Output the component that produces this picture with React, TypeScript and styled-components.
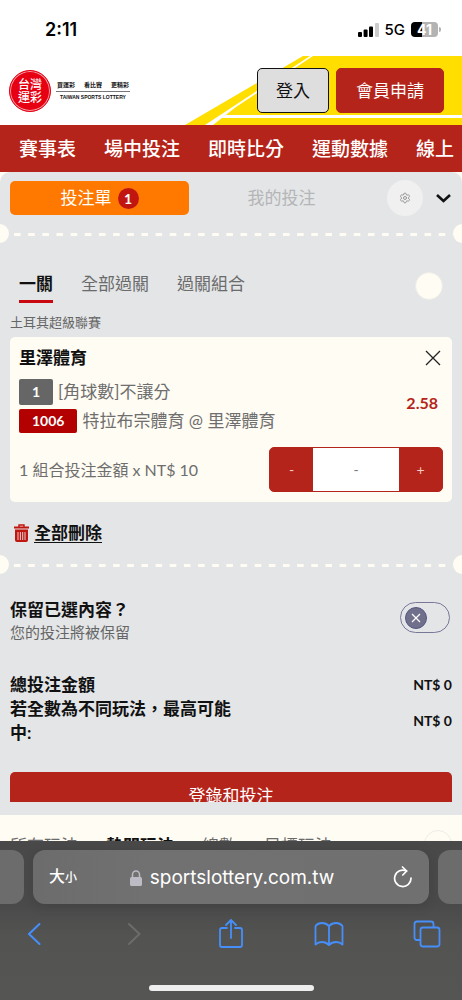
import React, { useState } from 'react';
import styled, { createGlobalStyle } from 'styled-components';
import { Settings } from 'lucide-react';

const red = '#b5241a';
const cream = '#fffcf3';
const panelGrey = '#e3e5e7';

const GlobalStyle = createGlobalStyle`
  *, *::before, *::after { box-sizing: border-box; }
  body {
    margin: 0;
    background: #fff;
    color: #111;
    font-family: Lato, "Noto Sans CJK TC", sans-serif;
    font-size: 17px;
    line-height: 24px;
  }
  button, input { font: inherit; color: inherit; margin: 0; }
  button { padding: 0; border: 0; background: none; cursor: pointer; }
  a { color: inherit; text-decoration: none; }
  h2, p { margin: 0; }
  svg { display: block; flex: none; }
`;

const Screen = styled.div`
  display: flex;
  flex-direction: column;
  height: 100vh;
  overflow: hidden;
`;

/* Phone status bar */

const StatusBar = styled.div`
  display: flex;
  flex: none;
  justify-content: space-between;
  align-items: center;
  height: 56px;
  padding: 3px 22px 0 45px;
  font-family: Inter, sans-serif;
  color: #000;
`;

const Clock = styled.time`
  font-size: 18px;
  font-weight: 600;
`;

const StatusIcons = styled.div`
  display: flex;
  align-items: center;
  gap: 6px;
  font-size: 15px;
  font-weight: 500;
`;

const Battery = styled.span`
  position: relative;
  width: 27px;
  height: 15px;
  margin-right: 2px;
  border-radius: 4px;
  background: linear-gradient(90deg, #000 41%, #b3b3b3 41%);
  color: #fff;
  font-size: 14px;
  font-weight: 700;
  line-height: 15px;
  text-align: center;

  &::after {
    content: '';
    position: absolute;
    top: 5px;
    right: -3px;
    width: 2px;
    height: 5px;
    border-radius: 0 2px 2px 0;
    background: #b3b3b3;
  }
`;

/* Site header */

const Page = styled.div`
  flex: 1;
  min-height: 0;
  overflow: hidden;
  background: ${cream};
`;

const Header = styled.header`
  position: relative;
  display: flex;
  align-items: center;
  justify-content: space-between;
  height: 69px;
  padding: 0 18px 0 9px;
  background: #fff;
`;

const HeaderArt = styled.svg`
  position: absolute;
  top: 0;
  right: 0;
`;

const Logo = styled.a`
  position: relative;
  display: flex;
  align-items: center;
  gap: 5px;
`;

const Seal = styled.span`
  display: grid;
  place-content: center;
  width: 42px;
  height: 42px;
  border: 1px solid #e60012;
  border-radius: 50%;
  background: #e60012;
  box-shadow: inset 0 0 0 1px #f7a0a5;
  color: #fff;
  font-size: 12px;
  font-weight: 500;
  line-height: 13px;
`;

const LogoText = styled.span`
  display: flex;
  flex-direction: column;
  width: 74px;
  font-weight: 700;
`;

const Slogan = styled.span`
  display: flex;
  justify-content: space-between;
  padding: 0 1px 1px;
  border-bottom: 1px solid #777;
  font-size: 6px;
  line-height: 10px;
`;

const LogoName = styled.span`
  font-family: "Liberation Sans", sans-serif;
  font-size: 5px;
  line-height: 10px;
  text-align: center;
  white-space: nowrap;
`;

const HeaderActions = styled.div`
  position: relative;
  display: flex;
  gap: 7px;
`;

const HeaderButton = styled.button<{ $primary?: boolean }>`
  height: 45px;
  padding: 0 ${p => (p.$primary ? 19 : 18)}px;
  border: 1px solid ${p => (p.$primary ? red : '#111')};
  border-radius: 5px;
  background: ${p => (p.$primary ? red : '#dedede')};
  color: ${p => (p.$primary ? '#fff' : '#111')};
`;

const Nav = styled.nav`
  display: flex;
  align-items: center;
  gap: 28px;
  height: 47px;
  padding-left: 19px;
  overflow: hidden;
  background: ${red};
  color: #fff;
  font-size: 19px;
  font-weight: 500;
  white-space: nowrap;
`;

/* Bet slip */

const Slip = styled.main`
  padding: 8px 0 13px;
  border-radius: 10px 10px 0 0;
  background: ${panelGrey};
`;

const SlipHeader = styled.div`
  display: flex;
  align-items: center;
  gap: 3px;
  height: 36px;
  padding: 0 10px;
`;

const SlipTab = styled.button<{ $active?: boolean }>`
  display: flex;
  flex: 1;
  align-items: center;
  justify-content: center;
  gap: 6px;
  height: 34px;
  border-radius: 5px;
  background: ${p => (p.$active ? '#ff7900' : 'transparent')};
  color: ${p => (p.$active ? '#fff' : '#b4b5b6')};
`;

const Count = styled.span`
  width: 21px;
  height: 21px;
  border-radius: 50%;
  background: #c1150f;
  font-size: 14px;
  font-weight: 700;
  line-height: 21px;
`;

const SettingsButton = styled.button`
  display: grid;
  place-items: center;
  width: 36px;
  height: 36px;
  margin: 0 9px 0 13px;
  border-radius: 50%;
  background: #f0f0f0;
  color: #999;
`;

const Perforation = styled.div`
  display: flex;
  align-items: center;
  justify-content: space-between;
  height: 19px;
  margin: 8px 0 0;
  overflow: hidden;

  &::before, &::after {
    content: '';
    width: 19px;
    height: 19px;
    margin-left: -10px;
    border-radius: 50%;
    background: ${cream};
  }
  &::after { margin: 0 -10px 0 0; }
`;

const Dashes = styled.span`
  flex: 1;
  height: 3px;
  margin: 2px 0 0 5px;
  background: linear-gradient(90deg, ${cream} 50%, transparent 50%) 0 0 / 14px 3px round;
`;

const TabRow = styled.div`
  display: flex;
  align-items: center;
  gap: 28px;
  padding: 0 19px;
`;

const Tab = styled.button<{ $active?: boolean }>`
  height: 35px;
  border-bottom: 3px solid ${p => (p.$active ? '#c9090f' : 'transparent')};
  color: ${p => (p.$active ? '#111' : '#6b6b6b')};
  font-weight: ${p => (p.$active ? 700 : 400)};
  white-space: nowrap;
`;

const RoundButton = styled.button`
  width: 28px;
  height: 28px;
  margin-left: auto;
  border: 1px solid #eeece8;
  border-radius: 50%;
  background: ${cream};
`;

const Selections = styled.section`
  padding-top: 25px;
`;

const League = styled.p`
  margin: 9px 10px 5px;
  color: #666;
  font-size: 13px;
  line-height: 20px;
`;

const Card = styled.article`
  margin: 0 10px;
  padding: 10px 9px;
  border-radius: 5px;
  background: ${cream};
`;

const CardHeader = styled.div`
  display: flex;
  align-items: center;
  justify-content: space-between;
  height: 22px;
  margin-bottom: 10px;
`;

const Title = styled.h2`
  font-size: 17px;
  font-weight: 700;
  line-height: 24px;
`;

const IconButton = styled.button`
  display: grid;
  place-items: center;
`;

const Selection = styled.div`
  display: flex;
  align-items: flex-start;
  justify-content: space-between;
  padding-right: 5px;
`;

const Lines = styled.div`
  display: grid;
  gap: 4px;
`;

const Line = styled.div`
  display: flex;
  align-items: center;
  gap: 5px;
  color: #6e6e6e;
`;

const Badge = styled.span<{ $red?: boolean }>`
  padding: 0 ${p => (p.$red ? 13 : 12)}px;
  min-width: 34px;
  border-radius: 2px;
  background: ${p => (p.$red ? '#b30000' : '#666')};
  color: #fff;
  font-size: 14px;
  font-weight: 700;
  line-height: ${p => (p.$red ? 24 : 26)}px;
  text-align: center;
`;

const Odds = styled.strong`
  color: ${red};
  font-size: 16px;
  line-height: 48px;
`;

const Stake = styled.div`
  display: flex;
  align-items: center;
  justify-content: space-between;
  margin-top: 14px;
  color: #6e6e6e;
  font-size: 16px;
`;

const Stepper = styled.div`
  display: flex;
  height: 45px;
  overflow: hidden;
  border: 1px solid ${red};
  border-radius: 5px;
  background: ${red};
  font-size: 14px;
`;

const StepButton = styled.button`
  width: 43px;
  color: #f3c9c5;
`;

const StakeInput = styled.input`
  width: 86px;
  border: 0;
  padding: 0;
  background: #fff;
  text-align: center;
  outline: 0;

  &::placeholder { color: #777; opacity: 1; }
`;

const DeleteAll = styled.button`
  display: flex;
  align-items: center;
  gap: 5px;
  height: 22px;
  margin: 20px 14px 11px;
  font-weight: 700;
  text-decoration: underline;
  text-underline-offset: 3px;
`;

const Summary = styled.section`
  padding: 24px 10px 0;
`;

const Keep = styled.label`
  display: flex;
  align-items: center;
  justify-content: space-between;
`;

const KeepHint = styled.p`
  color: #666;
  font-size: 15px;
  line-height: 20px;
`;

const Toggle = styled.input`
  appearance: none;
  width: 50px;
  height: 31px;
  margin: 0 2px 5px 0;
  border: 1px solid #77779a;
  border-radius: 16px;
  background: url("data:image/svg+xml,%3Csvg xmlns='http://www.w3.org/2000/svg' width='22' height='22'%3E%3Ccircle cx='11' cy='11' r='10.5' fill='%2370708c' stroke='%23555580'/%3E%3Cpath d='M7 7l8 8M15 7l-8 8' stroke='%23fff' stroke-width='1.2'/%3E%3C/svg%3E") no-repeat 4px center;

  &:checked { background-position: 22px center; }
`;

const Totals = styled.dl`
  display: grid;
  margin: 31px 0 27px;
`;

const Total = styled.div`
  display: flex;
  align-items: center;
  justify-content: space-between;
  font-weight: 700;
`;

const TotalLabel = styled.dt`
  width: 52%;
`;

const TotalValue = styled.dd`
  margin: 0;
  font-size: 14px;
`;

const SubmitArea = styled.div`
  height: 30px;
  overflow: hidden;
`;

const Submit = styled.button`
  width: 100%;
  height: 48px;
  border-radius: 5px;
  background: ${red};
  color: #fff;
`;

const Markets = styled.div`
  display: flex;
  align-items: flex-start;
  gap: 28px;
  padding: 15px 10px 0;
`;

/* Browser controls */

const BrowserBar = styled.footer`
  flex: none;
  padding: 9px 0;
  background: linear-gradient(#494949, #4a4a4a 40%, #535352 60%, #555553);
`;

const AddressRow = styled.div`
  display: flex;
  gap: 9px;
`;

const NeighbourTab = styled.span<{ $side: 'left' | 'right' }>`
  width: 24px;
  border-radius: ${p => (p.$side === 'left' ? '0 12px 12px 0' : '12px 0 0 12px')};
  background: #6c6c6c;
`;

const Address = styled.div`
  display: flex;
  flex: 1;
  align-items: center;
  justify-content: space-between;
  height: 54px;
  padding: 0 16px;
  border-radius: 12px;
  background: linear-gradient(90deg, #6c6c6c, #717171 30%, #707070);
  box-shadow: 0 2px 12px rgba(0, 0, 0, 0.12);
  color: #fff;
`;

const TextSize = styled.button`
  font-size: 16px;
  font-weight: 500;

  small { font-size: 12px; }
`;

const Domain = styled.a`
  display: flex;
  align-items: center;
  gap: 8px;
  padding: 2px 6px 0 0;
  font-family: Inter, sans-serif;
  font-size: 19px;
`;

const Toolbar = styled.div`
  display: flex;
  align-items: center;
  justify-content: space-between;
  height: 59px;
  padding: 0 20px;
`;

const ToolButton = styled(IconButton)`
  width: 30px;
`;

const HomeIndicator = styled.div`
  width: 165px;
  height: 6px;
  margin: 22px auto 0;
  border-radius: 3px;
  background: #eee;
`;

const navItems = ['賽事表', '場中投注', '即時比分', '運動數據', '線上'];
const slipTabs = ['一關', '全部過關', '過關組合'];
const markets = ['所有玩法', '熱門玩法', '總數', '目標玩法'];

function Divider() {
  return <Perforation><Dashes /></Perforation>;
}

export default function App() {
  const [tab, setTab] = useState(0);
  const [market, setMarket] = useState(1);
  const [stake, setStake] = useState('');
  const step = (by: number) => {
    const next = (Number(stake) || 0) + by;
    setStake(next > 0 ? String(next) : '');
  };

  return (
    <Screen lang="zh-Hant">
      <GlobalStyle />
      <StatusBar>
        <Clock>2:11</Clock>
        <StatusIcons>
          <svg width="21" height="14" viewBox="0 0 21 14">
            <rect x="0" y="9" width="4" height="5" rx="1" />
            <rect x="5.600" y="6.500" width="4" height="7.500" rx="1" />
            <rect x="11" y="3.500" width="4" height="10.500" rx="1" />
            <rect x="17" y="0" width="4" height="14" rx="1" fill="#ccc" />
          </svg>
          <span>5G</span>
          <Battery>41</Battery>
        </StatusIcons>
      </StatusBar>

      <Page>
        <Header>
          <HeaderArt width="277" height="69" viewBox="0 0 277 69" aria-hidden="true">
            <path d="M0 69L118 0H277V69Z" fill="#ffde00" />
            <path d="M20 69L125 0H128L51 51L28 69Z" fill="#fff" />
            <path d="M34 62L41 59H277V62Z" fill="#fff" />
          </HeaderArt>
          <Logo href="#">
            <Seal><span>台灣</span><span>運彩</span></Seal>
            <LogoText>
              <Slogan><span>買運彩</span><span>看比賽</span><span>更精彩</span></Slogan>
              <LogoName>TAIWAN SPORTS LOTTERY</LogoName>
            </LogoText>
          </Logo>
          <HeaderActions>
            <HeaderButton>登入</HeaderButton>
            <HeaderButton $primary>會員申請</HeaderButton>
          </HeaderActions>
        </Header>
        <Nav>
          {navItems.map(item => <a key={item} href="#">{item}</a>)}
        </Nav>

        <Slip>
          <SlipHeader>
            <SlipTab $active>投注單<Count>1</Count></SlipTab>
            <SlipTab>我的投注</SlipTab>
            <SettingsButton aria-label="設定"><Settings size={12} strokeWidth={2} /></SettingsButton>
            <IconButton aria-label="收合">
              <svg width="17" height="10" viewBox="0 0 17 10" fill="none" stroke="#111" strokeWidth="2.6">
                <path d="M2 2L8.500 8L15 2" />
              </svg>
            </IconButton>
          </SlipHeader>
          <Divider />

          <Selections>
            <TabRow>
              {slipTabs.map((name, i) => (
                <Tab key={name} $active={i === tab} onClick={() => setTab(i)}>{name}</Tab>
              ))}
              <RoundButton aria-label="更多" />
            </TabRow>
            <League>土耳其超級聯賽</League>
            <Card>
              <CardHeader>
                <Title>里澤體育</Title>
                <IconButton aria-label="移除">
                  <svg width="20" height="16" viewBox="0 0 20 16" fill="none" stroke="#222" strokeWidth="1.3">
                    <path d="M3 1L17 15M17 1L3 15" />
                  </svg>
                </IconButton>
              </CardHeader>
              <Selection>
                <Lines>
                  <Line><Badge>1</Badge>[角球數]不讓分</Line>
                  <Line><Badge $red>1006</Badge>特拉布宗體育 @ 里澤體育</Line>
                </Lines>
                <Odds>2.58</Odds>
              </Selection>
              <Stake>
                <label htmlFor="stake">1 組合投注金額 x NT$ 10</label>
                <Stepper>
                  <StepButton aria-label="減少" onClick={() => step(-1)}>-</StepButton>
                  <StakeInput id="stake" placeholder="-" value={stake} onChange={e => setStake(e.target.value)} />
                  <StepButton aria-label="增加" onClick={() => step(1)}>+</StepButton>
                </Stepper>
              </Stake>
            </Card>
            <DeleteAll>
              <svg width="15" height="18" viewBox="0 0 15 18" fill="none">
                <path d="M5 3V1H10V3" stroke="#c1150f" strokeWidth="1.4" />
                <path d="M0 2.500H15V4.500H0Z" fill="#c1150f" />
                <path d="M1 5.500H14V16Q14 18 12 18H3Q1 18 1 16Z" fill="#c1150f" />
                <path d="M4 8V16M6.400 8V16M8.700 8V16M11 8V16" stroke="#e3e5e7" strokeWidth="0.9" />
              </svg>
              全部刪除
            </DeleteAll>
          </Selections>
          <Divider />

          <Summary>
            <Keep>
              <div>
                <Title>保留已選內容？</Title>
                <KeepHint>您的投注將被保留</KeepHint>
              </div>
              <Toggle type="checkbox" role="switch" />
            </Keep>
            <Totals>
              <Total><TotalLabel>總投注金額</TotalLabel><TotalValue>NT$ 0</TotalValue></Total>
              <Total><TotalLabel>若全數為不同玩法，最高可能中:</TotalLabel><TotalValue>NT$ 0</TotalValue></Total>
            </Totals>
            <SubmitArea><Submit>登錄和投注</Submit></SubmitArea>
          </Summary>
        </Slip>

        <Markets>
          {markets.map((name, i) => (
            <Tab key={name} $active={i === market} onClick={() => setMarket(i)}>{name}</Tab>
          ))}
          <RoundButton aria-label="更多玩法" />
        </Markets>
      </Page>

      <BrowserBar>
        <AddressRow>
          <NeighbourTab $side="left" />
          <Address>
            <TextSize>大<small>小</small></TextSize>
            <Domain href="#">
              <svg width="12" height="16" viewBox="0 0 12 16" fill="none">
                <path d="M2.500 8V4.500A3.500 3.500 0 0 1 9.500 4.500V8" stroke="#bdbcc4" strokeWidth="1.5" />
                <rect y="7" width="12" height="9" rx="1.500" fill="#bdbcc4" />
              </svg>
              sportslottery.com.tw
            </Domain>
            <IconButton aria-label="重新載入">
              <svg width="20" height="24" viewBox="0 0 20 24" fill="none" stroke="#fff" strokeWidth="1.700" strokeLinecap="round" strokeLinejoin="round">
                <path d="M18 13A8.200 8.200 0 1 1 13.500 6" />
                <path d="M9.500 2L13.700 6L9.800 10" />
              </svg>
            </IconButton>
          </Address>
          <NeighbourTab $side="right" />
        </AddressRow>
        <Toolbar>
          <ToolButton aria-label="上一頁">
            <svg width="26" height="28" viewBox="0 0 26 28" fill="none" stroke="#468ffa" strokeWidth="2" strokeLinecap="round">
              <path d="M17.500 4L7 14L17.500 24" />
            </svg>
          </ToolButton>
          <ToolButton aria-label="下一頁" disabled>
            <svg width="26" height="28" viewBox="0 0 26 28" fill="none" stroke="#6c6c6c" strokeWidth="2" strokeLinecap="round">
              <path d="M9 4L19.500 14L9 24" />
            </svg>
          </ToolButton>
          <ToolButton aria-label="分享">
            <svg width="26" height="30" viewBox="0 0 26 30" fill="none" stroke="#468ffa" strokeWidth="1.800" strokeLinecap="round" strokeLinejoin="round">
              <path d="M9 9H4Q2 9 2 11V26Q2 28 4 28H22Q24 28 24 26V11Q24 9 22 9H17" />
              <path d="M13 19V1M8 6L13 1L18 6" />
            </svg>
          </ToolButton>
          <ToolButton aria-label="書籤">
            <svg width="30" height="26" viewBox="0 0 30 26" fill="none" stroke="#468ffa" strokeWidth="1.800" strokeLinejoin="round">
              <path d="M15 5Q12 2 8 2T1.500 5V23.500Q4 21 8 21T15 24Q18 21 22 21T28.500 23.500V5Q26 2 22 2T15 5Z" />
              <path d="M15 5V24" />
            </svg>
          </ToolButton>
          <ToolButton aria-label="分頁">
            <svg width="28" height="28" viewBox="0 0 28 28" fill="none" stroke="#468ffa" strokeWidth="1.800">
              <path d="M7.500 20H4Q1.500 20 1.500 17.500V4Q1.500 1.500 4 1.500H18Q20.500 1.500 20.500 4V7" />
              <rect x="7.500" y="7.500" width="19" height="19" rx="2.500" />
            </svg>
          </ToolButton>
        </Toolbar>
        <HomeIndicator />
      </BrowserBar>
    </Screen>
  );
}
